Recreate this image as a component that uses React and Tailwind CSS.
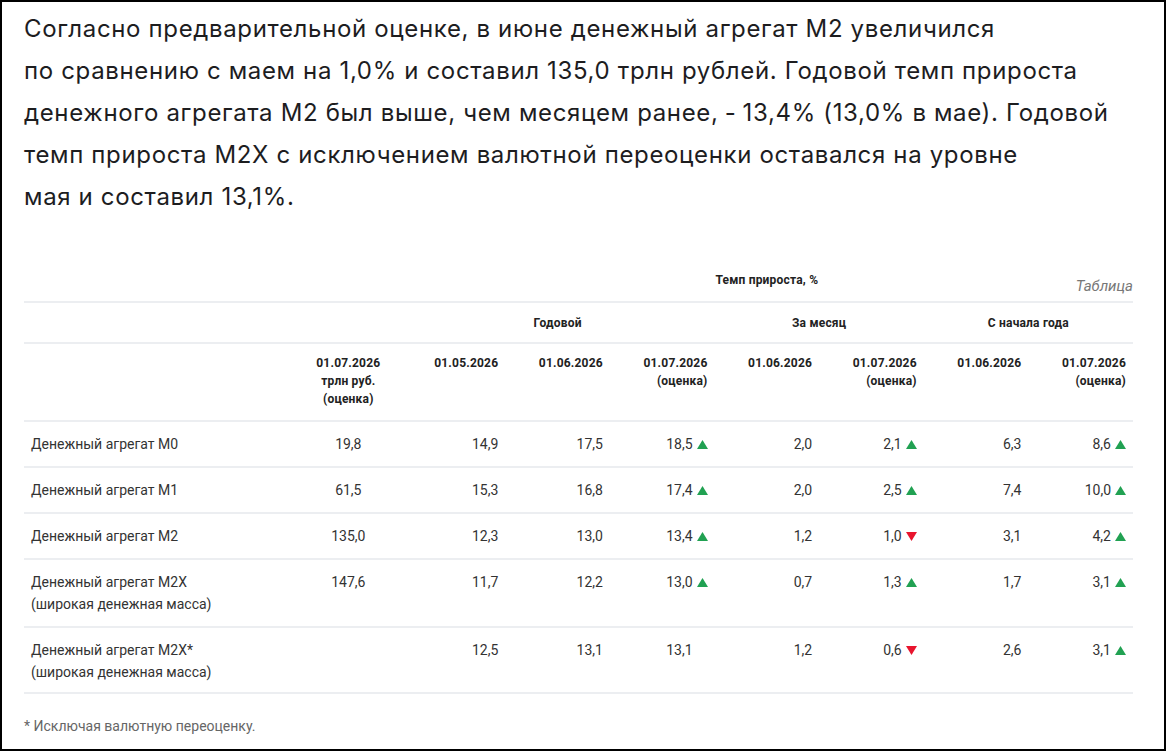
const rows = [
  { name: ['Денежный агрегат М0'], level: '19,8', vals: [['14,9'], ['17,5'], ['18,5', 'up'], ['2,0'], ['2,1', 'up'], ['6,3'], ['8,6', 'up']] },
  { name: ['Денежный агрегат М1'], level: '61,5', vals: [['15,3'], ['16,8'], ['17,4', 'up'], ['2,0'], ['2,5', 'up'], ['7,4'], ['10,0', 'up']] },
  { name: ['Денежный агрегат М2'], level: '135,0', vals: [['12,3'], ['13,0'], ['13,4', 'up'], ['1,2'], ['1,0', 'down'], ['3,1'], ['4,2', 'up']] },
  { name: ['Денежный агрегат М2Х', '(широкая денежная масса)'], level: '147,6', vals: [['11,7'], ['12,2'], ['13,0', 'up'], ['0,7'], ['1,3', 'up'], ['1,7'], ['3,1', 'up']] },
  { name: ['Денежный агрегат М2Х*', '(широкая денежная масса)'], level: '', vals: [['12,5'], ['13,1'], ['13,1', 'none'], ['1,2'], ['0,6', 'down'], ['2,6'], ['3,1', 'up']], last: true },
]

const Arrow = ({ dir }) => {
  if (!dir) return null
  if (dir === 'none') return <span className="ml-[4px] inline-block w-[11px]" />
  return (
    <svg viewBox="0 0 11 9" className="ml-[4px] inline-block h-[9px] w-[11px] align-[0px]">
      {dir === 'up' ? (
        <polygon points="5.5,0 11,9 0,9" fill="#21a152" />
      ) : (
        <polygon points="0,0 11,0 5.5,9" fill="#e8142d" />
      )}
    </svg>
  )
}

const line = 'border-b-2 border-[#eceef1]'

export default function App() {
  return (
    <div className="h-[751px] w-[1166px] overflow-hidden border-2 border-black bg-white pl-[22px] text-[#222]">
      <p
        className="pt-[6px] text-[24px] leading-[42px] tracking-[0.65px] text-[#1d1d1f]"
        style={{ fontFamily: 'Inter, "Noto Sans", sans-serif' }}
      >
        Согласно предварительной оценке, в июне денежный агрегат М2 увеличился
        <br />
        по сравнению с маем на 1,0% и составил 135,0 трлн рублей. Годовой темп прироста
        <br />
        денежного агрегата М2 был выше, чем месяцем ранее, ‑ 13,4% (13,0% в мае). Годовой
        <br />
        темп прироста М2Х с исключением валютной переоценки оставался на уровне
        <br />
        мая и составил 13,1%.
      </p>

      <table
        className="mt-[43px] w-[1109px] table-fixed border-collapse text-[14px] text-[#333]"
        style={{ fontFamily: 'Roboto, "Liberation Sans", sans-serif' }}
      >
        <colgroup>
          <col className="w-[272px]" />
          <col /><col /><col /><col /><col /><col /><col /><col />
        </colgroup>
        <thead className="text-[12px] font-bold text-[#222]">
          <tr className={line}>
            <th colSpan={2} className="h-[41px]" />
            <th colSpan={7} className="relative h-[41px] pb-[3px] text-center font-bold tracking-[0.2px]">
              Темп прироста, %
              <span className="absolute bottom-[4px] right-0 text-[15px] font-normal italic tracking-normal text-[#777]">Таблица</span>
            </th>
          </tr>
          <tr className={`${line} tracking-[0.2px]`}>
            <th colSpan={2} className="h-[41px]" />
            <th colSpan={3} className="h-[41px] text-center">Годовой</th>
            <th colSpan={2} className="h-[41px] text-center">За месяц</th>
            <th colSpan={2} className="h-[41px] text-center">С начала года</th>
          </tr>
          <tr className={`${line} align-top leading-[18px] tracking-[0.2px]`}>
            <th className="pb-[12px] pt-[10px]" />
            <th className="pb-[12px] pt-[10px] text-center">
              01.07.2026
              <br />
              трлн руб.
              <br />
              (оценка)
            </th>
            <th className="pr-[7px] pt-[10px] text-right">01.05.2026</th>
            <th className="pr-[7px] pt-[10px] text-right">01.06.2026</th>
            <th className="pr-[7px] pt-[10px] text-right">01.07.2026<br />(оценка)</th>
            <th className="pr-[7px] pt-[10px] text-right">01.06.2026</th>
            <th className="pr-[7px] pt-[10px] text-right">01.07.2026<br />(оценка)</th>
            <th className="pr-[7px] pt-[10px] text-right">01.06.2026</th>
            <th className="pr-[7px] pt-[10px] text-right">01.07.2026<br />(оценка)</th>
          </tr>
        </thead>
        <tbody className="leading-[22px]">
          {rows.map((row) => {
            const pad = row.last ? 'pt-[11px] pb-[9px]' : 'py-[11px]'
            return (
              <tr key={row.name.join(' ')} className={`${line} align-top`}>
                <td className={`${pad} pl-[7px]`}>
                  {row.name.map((n, i) => (
                    <div key={i}>{n}</div>
                  ))}
                </td>
                <td className={`${pad} text-center`}>{row.level}</td>
                {row.vals.map(([v, dir], i) => (
                  <td key={i} className={`${pad} whitespace-nowrap pr-[7px] text-right`}>
                    {v}
                    <Arrow dir={dir} />
                  </td>
                ))}
              </tr>
            )
          })}
        </tbody>
      </table>

      <p
        className="mt-[22px] text-[14px] leading-[20px] text-[#666]"
        style={{ fontFamily: 'Roboto, "Liberation Sans", sans-serif' }}
      >
        * Исключая валютную переоценку.
      </p>
    </div>
  )
}
